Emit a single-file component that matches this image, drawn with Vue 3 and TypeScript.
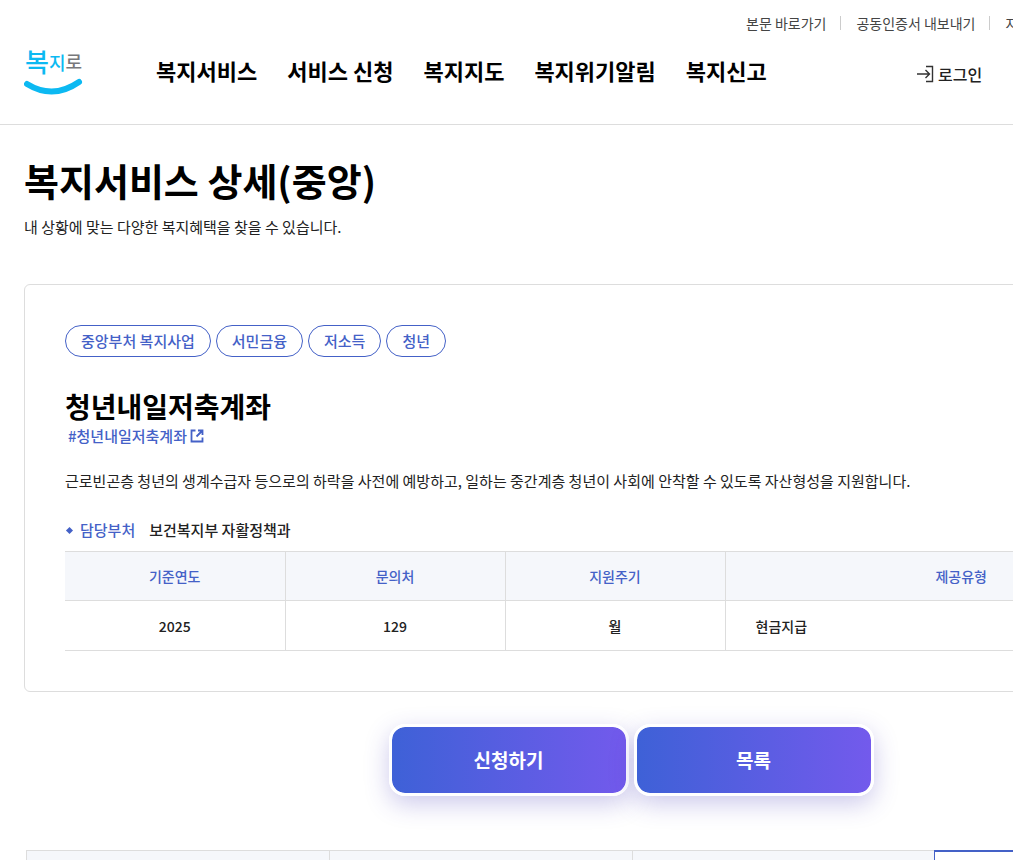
<script setup lang="ts">
interface Column {
  head: string
  value: string
  wide?: boolean
}

const menus: string[] = ['복지서비스', '서비스 신청', '복지지도', '복지위기알림', '복지신고']
const utilities: string[] = ['본문 바로가기', '공동인증서 내보내기', '자주찾는 질문']
const tags: string[] = ['중앙부처 복지사업', '서민금융', '저소득', '청년']
const columns: Column[] = [
  { head: '기준연도', value: '2025' },
  { head: '문의처', value: '129' },
  { head: '지원주기', value: '월' },
  { head: '제공유형', value: '현금지급', wide: true },
]
const tabs: number[] = [1, 2, 3, 4]
const activeTab = 4
</script>

<template>
  <div class="viewport">
    <div class="page">
      <header class="header">
        <div class="header-inner">
          <a class="logo" href="#">
            <svg width="60" height="66" viewBox="0 -12 60 66" role="img" aria-label="복지로">
              <text class="logo-text" x="1" y="28" fill="#0cb9f2"><tspan font-size="26">복</tspan><tspan font-size="18" dy="-2">지</tspan><tspan font-size="18" dy="-1" fill="#77787b">로</tspan></text>
              <path d="M3 40Q29 56 55 38" fill="none" stroke="#0cb9f2" stroke-width="6" stroke-linecap="round" />
            </svg>
          </a>
          <nav class="menu">
            <a v-for="menu in menus" :key="menu" href="#">{{ menu }}</a>
          </nav>
          <div class="side">
            <ul class="utilities">
              <li v-for="item in utilities" :key="item"><a href="#">{{ item }}</a></li>
            </ul>
            <a class="login" href="#">
              <svg width="18" height="18" viewBox="0 0 18 18" aria-hidden="true">
                <path d="M9 1.5H15.5V16.5H9M0 9H12.5M8.5 5L12.5 9L8.5 13" fill="none" stroke="#333" stroke-width="1.4" />
              </svg>
              로그인
            </a>
          </div>
        </div>
      </header>

      <main class="content">
        <h1>복지서비스 상세(중앙)</h1>
        <p class="lead">내 상황에 맞는 다양한 복지혜택을 찾을 수 있습니다.</p>

        <section class="card">
          <ul class="tags">
            <li v-for="tag in tags" :key="tag">{{ tag }}</li>
          </ul>
          <h2>청년내일저축계좌</h2>
          <a class="hash" href="#">
            #청년내일저축계좌
            <svg width="14" height="14" viewBox="0 0 14 14" aria-hidden="true">
              <path d="M5.5 1.5H1.5V12.5H12.5V8.5M8 1.5H12.5V6M12.5 1.5L6.5 7.5" fill="none" stroke="#4461c7" stroke-width="1.8" />
            </svg>
          </a>
          <p class="summary">근로빈곤층 청년의 생계수급자 등으로의 하락을 사전에 예방하고, 일하는 중간계층 청년이 사회에 안착할 수 있도록 자산형성을 지원합니다.</p>
          <dl class="dept">
            <dt>담당부처</dt>
            <dd>보건복지부 자활정책과</dd>
          </dl>
          <table>
            <thead>
              <tr>
                <th v-for="col in columns" :key="col.head" scope="col" :class="{ wide: col.wide }">{{ col.head }}</th>
              </tr>
            </thead>
            <tbody>
              <tr>
                <td v-for="col in columns" :key="col.head" :class="{ wide: col.wide }">{{ col.value }}</td>
              </tr>
            </tbody>
          </table>
        </section>

        <div class="actions">
          <button type="button">신청하기</button>
          <button type="button">목록</button>
        </div>

        <div class="tabs">
          <div v-for="tab in tabs" :key="tab" class="tab" :class="{ active: tab === activeTab }"></div>
        </div>
      </main>
    </div>
  </div>
</template>

<style>
body {
  margin: 0;
  background: #fff;
}
</style>

<style scoped>
.viewport {
  height: 100vh;
  overflow: hidden;
  font-family: "Noto Sans CJK KR", "Noto Sans", sans-serif;
  font-size: 15px;
  color: #222;
}
.page {
  min-width: 1262px;
}
a {
  color: inherit;
  text-decoration: none;
}
ul, dl, dd, h1, h2, p {
  margin: 0;
  padding: 0;
  list-style: none;
}
.header {
  border-bottom: 1px solid #ddd;
}
.header-inner {
  display: flex;
  height: 124px;
  padding: 0 24px;
}
.logo {
  flex: none;
  width: 132px;
  padding-top: 32px;
}
.logo-text {
  font-weight: 500;
}
.menu {
  display: flex;
  flex: 1;
  gap: 30px;
  min-width: 0;
  padding-top: 54px;
  font-size: 22px;
  font-weight: 700;
  line-height: 32px;
  color: #000;
  white-space: nowrap;
}
.side {
  display: flex;
  flex: none;
  flex-direction: column;
  width: 492px;
  padding-top: 13px;
}
.utilities {
  display: flex;
  font-size: 14px;
  line-height: 20px;
  color: #444;
  white-space: nowrap;
}
.utilities li {
  display: flex;
  align-items: center;
}
.utilities li + li::before {
  content: "";
  width: 1px;
  height: 14px;
  margin: 0 15px 0 14px;
  background: #ccc;
}
.login {
  display: flex;
  align-items: center;
  gap: 3px;
  margin: 31px 0 0 171px;
  font-size: 16px;
  font-weight: 500;
  line-height: 20px;
}
.content {
  padding: 31px 24px 0;
}
h1 {
  font-size: 38px;
  font-weight: 700;
  line-height: 48px;
  color: #000;
}
.lead {
  margin-top: 11px;
  line-height: 24px;
}
.card {
  margin-top: 45px;
  padding: 40px;
  border: 1px solid #ddd;
  border-radius: 6px;
}
.tags {
  display: flex;
  gap: 5px;
}
.tags li {
  padding: 0 15px;
  border: 1px solid #4461c7;
  border-radius: 16px;
  font-weight: 500;
  line-height: 30px;
  color: #4461c7;
}
h2 {
  margin-top: 31px;
  font-size: 28px;
  font-weight: 700;
  line-height: 36px;
  color: #000;
}
.hash {
  display: flex;
  align-items: center;
  gap: 3px;
  padding-left: 3px;
  font-weight: 500;
  line-height: 24px;
  color: #4461c7;
}
.summary {
  margin-top: 21px;
  line-height: 24px;
}
.dept {
  display: flex;
  align-items: center;
  margin-top: 25px;
  font-weight: 500;
  line-height: 24px;
}
.dept dt {
  display: flex;
  align-items: center;
  color: #4461c7;
}
.dept dt::before {
  content: "";
  width: 5px;
  height: 5px;
  margin: 0 8px 0 2px;
  background: #4461c7;
  transform: rotate(45deg);
}
.dept dd {
  margin-left: 14px;
}
table {
  width: 100%;
  margin-top: 9px;
  border-collapse: collapse;
  table-layout: fixed;
  font-size: 14px;
  font-weight: 500;
}
th, td {
  box-sizing: border-box;
  width: 220px;
  padding: 0;
  border: solid #ddd;
  border-width: 1px 1px 1px 0;
  text-align: center;
  font-weight: 500;
}
th {
  height: 49px;
  background: #f5f7fb;
  color: #4461c7;
}
td {
  height: 50px;
}
.wide {
  width: auto;
  border-right: 0;
}
td.wide {
  padding-left: 30px;
  text-align: left;
}
.actions {
  display: flex;
  justify-content: center;
  gap: 5px;
  margin-top: 32px;
}
button {
  width: 240px;
  height: 72px;
  padding: 0 0 2px;
  border: 3px solid #fff;
  border-radius: 16px;
  background: linear-gradient(90deg, #3e61d7, #735aec) padding-box;
  box-shadow: 0 8px 24px rgba(60, 50, 180, 0.26);
  font-family: inherit;
  font-size: 19px;
  font-weight: 700;
  color: #fff;
}
.tabs {
  display: flex;
  margin: 54px 0 0 2px;
}
.tab {
  box-sizing: border-box;
  flex: 1;
  height: 60px;
  border: solid #ddd;
  border-width: 1px 0 1px 1px;
  background: #f5f7fb;
}
.tab.active {
  border: 2px solid #4461c7;
  border-width: 2px 1px 0;
  background: #fff;
}
</style>
